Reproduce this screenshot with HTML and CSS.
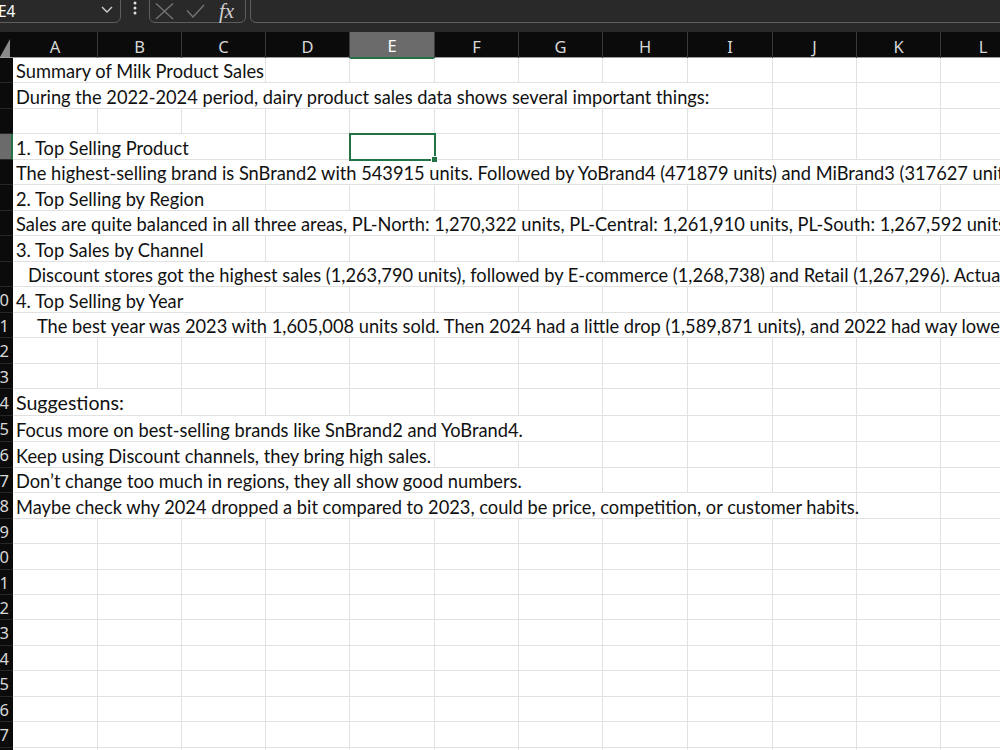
FILE: index.html
```html
<!DOCTYPE html>
<html lang="en">
<head>
<meta charset="utf-8">
<title>Summary of Milk Product Sales</title>
<link rel="stylesheet" href="styles.css">
</head>
<body>
<div class="app">
  <div class="topbar">
    <div class="namebox">
      <span class="nb-text">E4</span>
      <svg class="chev" width="12" height="7" viewBox="0 0 12 7"><polyline points="1,1 6,6 11,1" fill="none" stroke="#cfcfcf" stroke-width="1.4"/></svg>
    </div>
    <svg class="dots" width="4" height="16" viewBox="0 0 4 16"><circle cx="2" cy="3" r="1.5" fill="#e0e0e0"/><circle cx="2" cy="8" r="1.5" fill="#e0e0e0"/><circle cx="2" cy="13" r="1.5" fill="#e0e0e0"/></svg>
    <div class="fbtns">
      <svg class="ic-x" width="19" height="17" viewBox="0 0 19 17"><line x1="1" y1="0.5" x2="18" y2="16" stroke="#747474" stroke-width="1.4"/><line x1="18" y1="0.5" x2="1" y2="16" stroke="#747474" stroke-width="1.4"/></svg>
      <svg class="ic-ok" width="19" height="15" viewBox="0 0 19 15"><polyline points="1,6.5 7,13 18,1" fill="none" stroke="#747474" stroke-width="1.4"/></svg>
      <span class="fx">fx</span>
    </div>
    <div class="finput"></div>
  </div>

  <div class="sheet">
    <div class="colhead">
      <div class="corner"><svg width="10" height="18" viewBox="0 0 10 18"><polygon points="10,0 10,18 0,18" fill="#8a8a8a"/></svg></div>
      <div class="ch">A</div><div class="ch">B</div><div class="ch">C</div><div class="ch">D</div><div class="ch sel">E</div><div class="ch">F</div><div class="ch">G</div><div class="ch">H</div><div class="ch">I</div><div class="ch">J</div><div class="ch">K</div><div class="ch">L</div>
    </div>

    <div class="row h25"><div class="rh"><span class="one">1</span></div><div class="c t s3">Summary of Milk Product Sales</div><div class="c"></div><div class="c"></div><div class="c"></div><div class="c"></div><div class="c"></div><div class="c"></div><div class="c"></div><div class="c"></div><div class="c"></div></div>
    <div class="row h26"><div class="rh"><span class="one">2</span></div><div class="c t s9">During the 2022-2024 period, dairy product sales data shows several important things:</div><div class="c"></div><div class="c"></div><div class="c"></div></div>
    <div class="row h25"><div class="rh"><span class="one">3</span></div><div class="c"></div><div class="c"></div><div class="c"></div><div class="c"></div><div class="c"></div><div class="c"></div><div class="c"></div><div class="c"></div><div class="c"></div><div class="c"></div><div class="c"></div><div class="c"></div></div>
    <div class="row h26"><div class="rh rsel"><span class="one">4</span></div><div class="c t s3">1. Top Selling Product</div><div class="c"></div><div class="c active"><span class="handle"></span></div><div class="c"></div><div class="c"></div><div class="c"></div><div class="c"></div><div class="c"></div><div class="c"></div><div class="c"></div></div>
    <div class="row h25"><div class="rh"><span class="one">5</span></div><div class="c t s12">The highest-selling brand is SnBrand2 with 543915 units. Followed by YoBrand4 (471879 units) and MiBrand3 (317627 units).</div></div>
    <div class="row h26"><div class="rh"><span class="one">6</span></div><div class="c t s3">2. Top Selling by Region</div><div class="c"></div><div class="c"></div><div class="c"></div><div class="c"></div><div class="c"></div><div class="c"></div><div class="c"></div><div class="c"></div><div class="c"></div></div>
    <div class="row h25"><div class="rh"><span class="one">7</span></div><div class="c t s12">Sales are quite balanced in all three areas, PL-North: 1,270,322 units, PL-Central: 1,261,910 units, PL-South: 1,267,592 units. So no region is far ahead.</div></div>
    <div class="row h26"><div class="rh"><span class="one">8</span></div><div class="c t s3">3. Top Sales by Channel</div><div class="c"></div><div class="c"></div><div class="c"></div><div class="c"></div><div class="c"></div><div class="c"></div><div class="c"></div><div class="c"></div><div class="c"></div></div>
    <div class="row h25"><div class="rh"><span class="one">9</span></div><div class="c t s12 ind1">Discount stores got the highest sales (1,263,790 units), followed by E-commerce (1,268,738) and Retail (1,267,296). Actually all channels are very close.</div></div>
    <div class="row h26"><div class="rh"><span>10</span></div><div class="c t s3">4. Top Selling by Year</div><div class="c"></div><div class="c"></div><div class="c"></div><div class="c"></div><div class="c"></div><div class="c"></div><div class="c"></div><div class="c"></div><div class="c"></div></div>
    <div class="row h25"><div class="rh"><span>11</span></div><div class="c t s12 ind2">The best year was 2023 with 1,605,008 units sold. Then 2024 had a little drop (1,589,871 units), and 2022 had way lower sales.</div></div>
    <div class="row h26"><div class="rh"><span>12</span></div><div class="c"></div><div class="c"></div><div class="c"></div><div class="c"></div><div class="c"></div><div class="c"></div><div class="c"></div><div class="c"></div><div class="c"></div><div class="c"></div><div class="c"></div><div class="c"></div></div>
    <div class="row h25"><div class="rh"><span>13</span></div><div class="c"></div><div class="c"></div><div class="c"></div><div class="c"></div><div class="c"></div><div class="c"></div><div class="c"></div><div class="c"></div><div class="c"></div><div class="c"></div><div class="c"></div><div class="c"></div></div>
    <div class="row h27"><div class="rh"><span>14</span></div><div class="c t s2 big">Suggestions:</div><div class="c"></div><div class="c"></div><div class="c"></div><div class="c"></div><div class="c"></div><div class="c"></div><div class="c"></div><div class="c"></div><div class="c"></div><div class="c"></div></div>
    <div class="row h26"><div class="rh"><span>15</span></div><div class="c t s7">Focus more on best-selling brands like SnBrand2 and YoBrand4.</div><div class="c"></div><div class="c"></div><div class="c"></div><div class="c"></div><div class="c"></div></div>
    <div class="row h26"><div class="rh"><span>16</span></div><div class="c t s5">Keep using Discount channels, they bring high sales.</div><div class="c"></div><div class="c"></div><div class="c"></div><div class="c"></div><div class="c"></div><div class="c"></div><div class="c"></div></div>
    <div class="row h25"><div class="rh"><span>17</span></div><div class="c t s7">Don’t change too much in regions, they all show good numbers.</div><div class="c"></div><div class="c"></div><div class="c"></div><div class="c"></div><div class="c"></div></div>
    <div class="row h26"><div class="rh"><span>18</span></div><div class="c t s10">Maybe check why 2024 dropped a bit compared to 2023, could be price, competition, or customer habits.</div><div class="c"></div><div class="c"></div></div>
    <div class="row h25"><div class="rh"><span>19</span></div><div class="c"></div><div class="c"></div><div class="c"></div><div class="c"></div><div class="c"></div><div class="c"></div><div class="c"></div><div class="c"></div><div class="c"></div><div class="c"></div><div class="c"></div><div class="c"></div></div>
    <div class="row h26"><div class="rh"><span>20</span></div><div class="c"></div><div class="c"></div><div class="c"></div><div class="c"></div><div class="c"></div><div class="c"></div><div class="c"></div><div class="c"></div><div class="c"></div><div class="c"></div><div class="c"></div><div class="c"></div></div>
    <div class="row h25"><div class="rh"><span>21</span></div><div class="c"></div><div class="c"></div><div class="c"></div><div class="c"></div><div class="c"></div><div class="c"></div><div class="c"></div><div class="c"></div><div class="c"></div><div class="c"></div><div class="c"></div><div class="c"></div></div>
    <div class="row h25"><div class="rh"><span>22</span></div><div class="c"></div><div class="c"></div><div class="c"></div><div class="c"></div><div class="c"></div><div class="c"></div><div class="c"></div><div class="c"></div><div class="c"></div><div class="c"></div><div class="c"></div><div class="c"></div></div>
    <div class="row h26"><div class="rh"><span>23</span></div><div class="c"></div><div class="c"></div><div class="c"></div><div class="c"></div><div class="c"></div><div class="c"></div><div class="c"></div><div class="c"></div><div class="c"></div><div class="c"></div><div class="c"></div><div class="c"></div></div>
    <div class="row h25"><div class="rh"><span>24</span></div><div class="c"></div><div class="c"></div><div class="c"></div><div class="c"></div><div class="c"></div><div class="c"></div><div class="c"></div><div class="c"></div><div class="c"></div><div class="c"></div><div class="c"></div><div class="c"></div></div>
    <div class="row h26"><div class="rh"><span>25</span></div><div class="c"></div><div class="c"></div><div class="c"></div><div class="c"></div><div class="c"></div><div class="c"></div><div class="c"></div><div class="c"></div><div class="c"></div><div class="c"></div><div class="c"></div><div class="c"></div></div>
    <div class="row h25"><div class="rh"><span>26</span></div><div class="c"></div><div class="c"></div><div class="c"></div><div class="c"></div><div class="c"></div><div class="c"></div><div class="c"></div><div class="c"></div><div class="c"></div><div class="c"></div><div class="c"></div><div class="c"></div></div>
    <div class="row h26"><div class="rh"><span>27</span></div><div class="c"></div><div class="c"></div><div class="c"></div><div class="c"></div><div class="c"></div><div class="c"></div><div class="c"></div><div class="c"></div><div class="c"></div><div class="c"></div><div class="c"></div><div class="c"></div></div>
    <div class="row h25"><div class="rh"><span>28</span></div><div class="c"></div><div class="c"></div><div class="c"></div><div class="c"></div><div class="c"></div><div class="c"></div><div class="c"></div><div class="c"></div><div class="c"></div><div class="c"></div><div class="c"></div><div class="c"></div></div>
  </div>
</div>
</body>
</html>
```
FILE: styles.css
```css
html, body {
  margin: 0;
  padding: 0;
}
body {
  width: 1000px;
  height: 750px;
  overflow: hidden;
  background: #ffffff;
  font-family: Lato, "Noto Sans", sans-serif;
}
.app {
  width: 1000px;
  height: 750px;
  overflow: hidden;
}

/* ---------- formula bar ---------- */
.topbar {
  height: 32px;
  background: #292929;
  display: flex;
  align-items: flex-start;
  overflow: hidden;
}
.namebox {
  flex: none;
  margin-top: -6px;
  margin-left: -12px;
  width: 133px;
  height: 29px;
  box-sizing: border-box;
  border: 1px solid #5e5e5e;
  border-radius: 6px;
  display: flex;
  align-items: center;
  justify-content: space-between;
  padding: 4px 7px 0 9px;
  color: #ffffff;
  font-family: "Noto Sans", "Open Sans", sans-serif;
  font-size: 15.5px;
}
.chev {
  display: block;
  margin-top: -2px;
}
.dots {
  flex: none;
  display: block;
  margin: 0 0 0 12px;
}
.fbtns {
  flex: none;
  margin-top: -6px;
  margin-left: 12px;
  width: 97px;
  height: 29px;
  box-sizing: border-box;
  border: 1px solid #5e5e5e;
  border-radius: 6px;
  display: flex;
  align-items: center;
  padding: 0 6px 0 5px;
}
.ic-x {
  display: block;
  margin-top: 5px;
}
.ic-ok {
  display: block;
  margin-top: 5px;
  margin-left: 12px;
}
.fx {
  margin-left: 14px;
  margin-top: 6px;
  color: #cfcfcf;
  font-family: "Liberation Serif", "DejaVu Serif", serif;
  font-style: italic;
  font-size: 21px;
  line-height: 1;
}
.finput {
  flex: none;
  margin-top: -6px;
  margin-left: 4px;
  width: 800px;
  height: 29px;
  box-sizing: border-box;
  border: 1px solid #5e5e5e;
  border-radius: 6px;
}

/* ---------- grid ---------- */
.sheet {
  width: 1026px;
}
.colhead,
.row {
  display: grid;
  grid-template-columns: 13px 85px 84px 84px 84px 85px 84px 84px 85px 85px 84px 84px 85px;
}
.colhead {
  height: 26px;
  background: #0b0b0b;
  box-sizing: border-box;
  border-bottom: 1px solid #9c9c9c;
}
.corner {
  display: flex;
  align-items: flex-end;
  justify-content: flex-start;
  padding-bottom: 1px;
}
.corner svg {
  display: block;
}
.ch {
  box-sizing: border-box;
  border-right: 1px solid #3b3b3b;
  color: #d8d8d8;
  font-family: "Noto Sans", "Open Sans", sans-serif;
  font-size: 16.5px;
  display: flex;
  align-items: center;
  justify-content: center;
  padding-top: 2px;
}
.ch.sel {
  background: #6b6b6b;
  color: #ffffff;
  border-bottom: 2px solid #217346;
  margin-bottom: -1px;
}

.h25 { height: 25px; }
.h26 { height: 26px; }
.h27 { height: 27px; }

.rh {
  background: #0b0b0b;
  box-sizing: border-box;
  border-bottom: 1px solid #262626;
  overflow: hidden;
  display: flex;
  justify-content: flex-end;
  align-items: center;
  padding-right: 4px;
  color: #d8d8d8;
  font-family: "Noto Sans", "Open Sans", sans-serif;
  font-size: 16.5px;
}
.rh span {
  flex: none;
  white-space: nowrap;
}
.rh .one {
  margin-right: 20px;
}
.rh.rsel {
  background: #6b6b6b;
  border-right: 2px solid #217346;
  padding-right: 2px;
}

.c {
  box-sizing: border-box;
  border-right: 1px solid #e1e1e1;
  border-bottom: 1px solid #e1e1e1;
  min-width: 0;
  position: relative;
}
.t {
  white-space: pre;
  display: flex;
  align-items: flex-end;
  padding: 0 0 1px 3px;
  line-height: 20px;
  font-size: 18.25px;
  color: #111111;
}
.s2 { grid-column: span 2; }
.s3 { grid-column: span 3; }
.s5 { grid-column: span 5; }
.s7 { grid-column: span 7; }
.s9 { grid-column: span 9; }
.s10 { grid-column: span 10; }
.s12 { grid-column: span 12; }
.ind1 { padding-left: 15px; }
.ind2 { padding-left: 24px; }
.big {
  font-size: 19.6px;
  line-height: 22px;
}

.active {
  border: none;
  box-shadow: inset 0 -1px 0 #e1e1e1;
}
.active::after {
  content: "";
  position: absolute;
  left: -1px;
  top: -1px;
  right: -1px;
  bottom: -1px;
  border: 2px solid #217346;
}
.handle {
  position: absolute;
  right: -3px;
  bottom: -3px;
  width: 5px;
  height: 5px;
  background: #217346;
  border: 1px solid #ffffff;
  z-index: 2;
}
```
